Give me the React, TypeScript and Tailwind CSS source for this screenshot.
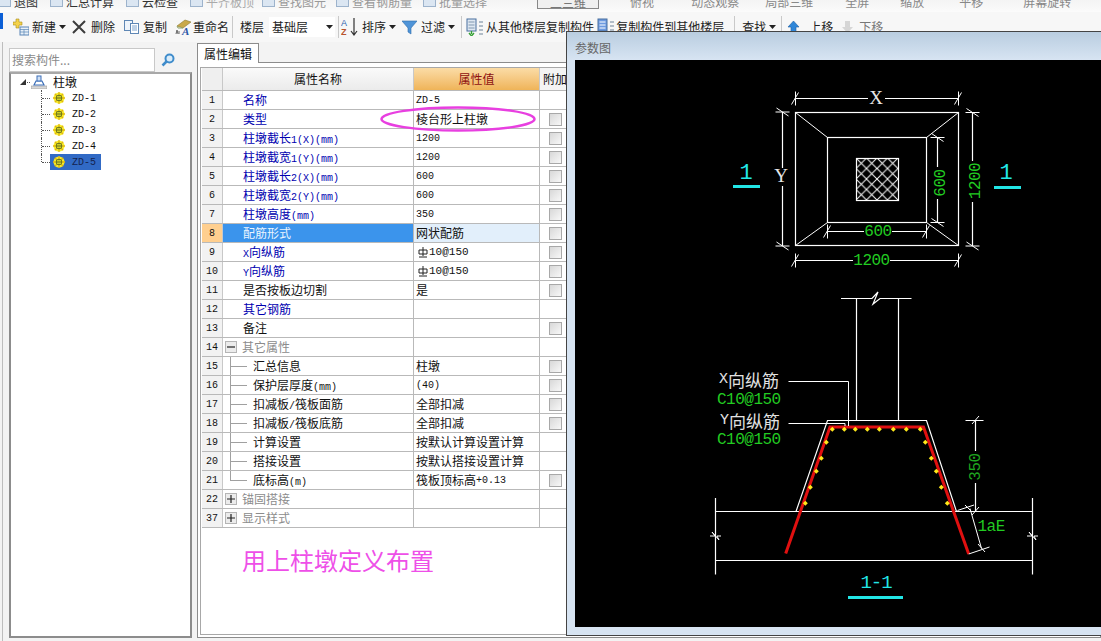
import React from 'react';

const CJK = '"Noto Sans CJK SC","Noto Sans CJK JP",sans-serif';
const MONO = '"Liberation Mono","Noto Sans CJK SC",monospace';

function T({ s }: { s: string }) {
  const parts = s.match(/[\x20-\x7e]+|[^\x20-\x7e]+/g) || [];
  return (
    <>
      {parts.map((p, i) =>
        /^[\x20-\x7e]/.test(p) ? (
          <span key={i} className="font-['Liberation_Mono'] text-[10px]">{p}</span>
        ) : (
          <span key={i}>{p}</span>
        )
      )}
    </>
  );
}

const Caret = () => (
  <svg width="7" height="4" viewBox="0 0 7 4" className="ml-[3px]"><path d="M0 0h7L3.5 4z" fill="#222" /></svg>
);
const Sep = ({ m }: { m: string }) => <span className={`h-[22px] w-px bg-[#c9c9c9] ${m}`} />;

const IconNew = () => (
  <svg width="16" height="18" viewBox="0 0 16 18">
    <path d="M3 1h3v3h3v3H6v3H3V7H0V4h3z" fill="#f4d24a" stroke="#a98f1e" strokeWidth=".6" />
    <rect x="7" y="9" width="9" height="8" fill="#e8f0f8" stroke="#5a86b8" />
    <path d="M7 11.5h9M7 14h9M11 11.5V17" stroke="#5a86b8" strokeWidth=".7" />
  </svg>
);
const IconX = () => (
  <svg width="14" height="14" viewBox="0 0 14 14"><path d="M1 1l12 12M13 1L1 13" stroke="#3c3c3c" strokeWidth="2" /></svg>
);
const IconCopy = () => (
  <svg width="15" height="14" viewBox="0 0 15 14">
    <rect x=".5" y=".5" width="8" height="10" fill="#eef4fb" stroke="#5f87b5" />
    <rect x="6.5" y="3.5" width="8" height="10" fill="#fff" stroke="#5f87b5" />
    <path d="M8 6h5M8 8h5M8 10h5" stroke="#7fa3cc" />
  </svg>
);
const IconRename = () => (
  <svg width="17" height="18" viewBox="0 0 17 18">
    <path d="M2 8l8-6 6 2-8 6z" fill="#c9a94a" stroke="#8c7a30" strokeWidth=".6" />
    <path d="M2 8l1 2 5 0" fill="none" stroke="#8fa36a" />
    <path d="M1 16l1-4 1 4M4 16v-3" stroke="#666" fill="none" />
    <text x="7" y="17" fontSize="11" fontWeight="700" fontStyle="italic" fill="#2b56a8" fontFamily="Liberation Serif">A</text>
  </svg>
);
const IconSort = () => (
  <svg width="18" height="20" viewBox="0 0 18 20">
    <text x="0" y="9" fontSize="9" fill="#2e62b0" fontFamily="Liberation Sans">A</text>
    <text x="0" y="18" fontSize="9" fontWeight="700" fill="#b8542c" fontFamily="Liberation Sans">Z</text>
    <path d="M13 1v16M10 14l3 4 3-4" stroke="#333" strokeWidth="1.2" fill="none" />
  </svg>
);
const IconFilter = () => (
  <svg width="15" height="15" viewBox="0 0 15 15"><path d="M0 1h15L9 8v6l-3-2V8z" fill="#4f94d8" stroke="#2d6cab" strokeWidth=".6" /></svg>
);
const IconCopyFrom = ({ up }: { up?: boolean }) => (
  <svg width="18" height="18" viewBox="0 0 18 18">
    <rect x="1" y="1" width="9" height="12" fill={up ? '#6d9ae0' : '#dfe8f2'} stroke="#486f9e" />
    <path d="M2.5 4h6M2.5 7h6M2.5 10h6" stroke={up ? '#fff' : '#8098b0'} />
    <path d="M13 4h4M13 8h4M13 12h4M13 16h4" stroke="#6f8399" strokeWidth="1.2" />
    {!up && <path d="M5.500 13v3M3 15l2.500 3L8 15" stroke="#35a035" strokeWidth="1.400" fill="none" />}
  </svg>
);
const IconArrow = ({ up }: { up?: boolean }) => (
  <svg width="13" height="14" viewBox="0 0 13 14">
    {up ? <path d="M6.500 1L12 7H9v6H4V7H1z" fill="#2f86d8" stroke="#1e5fa5" strokeWidth=".6" /> : <path d="M4 1h5v6h3l-5.500 6L1 7h3z" fill="#d6d6d6" />}
  </svg>
);
const Gear = () => (
  <svg width="12" height="12" viewBox="0 0 12 12">
    <circle cx="6" cy="6" r="5.500" fill="#f7ee2b" />
    <path d="M6 0v12M0 6h12M1.800 1.800l8.400 8.400M10.200 1.800l-8.400 8.400" stroke="#e2b80d" strokeWidth="1.300" />
    <circle cx="6" cy="6" r="3.200" fill="#6e7a1e" />
    <path d="M4 4.500h4M4 6h4M4 7.500h4" stroke="#f7ee2b" strokeWidth=".7" />
  </svg>
);
const Pier = () => (
  <svg width="16" height="14" viewBox="0 0 16 14">
    <path d="M0 11h16v3H0z" fill="#d8d8d8" stroke="#999" strokeWidth=".6" />
    <path d="M3 10l2-4h6l2 4z" fill="#fff" stroke="#3c6fb8" strokeWidth="1.200" />
    <rect x="6" y="1" width="4" height="5" fill="#cfe0f5" stroke="#3c6fb8" />
  </svg>
);
const Rebar = () => (
  <svg width="10" height="11" viewBox="0 0 10 11" className="mr-[1px]">
    <path d="M5 0v9M1 3h8v4H1zM1 10h8" stroke="#222" fill="none" strokeWidth="1" />
  </svg>
);

const topItems: [string, string][] = [
  ['退图', 'ml-[14px] text-[#333]'],
  ['汇总计算', 'ml-[28px] text-[#333]'],
  ['云检查', 'ml-[28px] text-[#333]'],
  ['平齐板顶', 'ml-[28px] text-[#aaa]'],
  ['查找图元', 'ml-[24px] text-[#999]'],
  ['查看钢筋量', 'ml-[26px] text-[#999]'],
  ['批量选择', 'ml-[27px] text-[#999]'],
];
const topRight: [string, string][] = [
  ['俯视', 'ml-[31px]'],
  ['动态观察', 'ml-[37px]'],
  ['局部三维', 'ml-[26px]'],
  ['全屏', 'ml-[32px]'],
  ['缩放', 'ml-[31px]'],
  ['平移', 'ml-[35px]'],
  ['屏幕旋转', 'ml-[40px]'],
];

function TopStrip() {
  return (
    <div className="flex h-[12px] overflow-hidden bg-gradient-to-b from-[#f4f4f4] to-[#fbfbfb]">
      <div className="flex items-start -mt-[6px] text-[12px] leading-[16px] whitespace-nowrap">
        {topItems.map(([t, c]) => (
          <span key={t} className={`${c} flex-none relative`}>
            <span className="absolute -left-[16px] top-[3px] h-[10px] w-[13px] border border-[#9db3cc] bg-[#dbe6f2]" />
            {t}
          </span>
        ))}
        <span className="ml-[50px] flex-none h-[15px] w-[62px] border border-[#888] bg-[#f0f0f0] text-center text-[#777]">二三维</span>
        {topRight.map(([t, c]) => (
          <span key={t} className={`${c} flex-none text-[#888]`}>{t}</span>
        ))}
      </div>
    </div>
  );
}

function Toolbar() {
  return (
    <div className="flex h-[30px] items-center bg-[#f7f7f7] text-[12px] text-[#222] whitespace-nowrap">
      <span className="h-[16px] w-[3px] -mt-[12px] bg-[#0b5fd6] flex-none" />
      <span className="ml-[10px]"><IconNew /></span>
      <span className="ml-[3px]">新建</span><Caret />
      <span className="ml-[6px]"><IconX /></span>
      <span className="ml-[5px]">删除</span>
      <span className="ml-[9px]"><IconCopy /></span>
      <span className="ml-[4px]">复制</span>
      <span className="ml-[8px]"><IconRename /></span>
      <span className="ml-[1px]">重命名</span>
      <Sep m="ml-[3px]" />
      <span className="ml-[7px]">楼层</span>
      <span className="ml-[5px] flex h-[20px] w-[66px] items-center justify-between bg-white pl-[3px] pr-[2px]">基础层<Caret /></span>
      <Sep m="ml-[3px]" />
      <span className="ml-[2px]"><IconSort /></span>
      <span className="ml-[3px]">排序</span><Caret />
      <span className="ml-[6px]"><IconFilter /></span>
      <span className="ml-[4px]">过滤</span><Caret />
      <Sep m="ml-[6px]" />
      <span className="ml-[4px]"><IconCopyFrom /></span>
      <span className="ml-[2px]">从其他楼层复制构件</span>
      <span className="ml-[3px]"><IconCopyFrom up /></span>
      <span className="ml-[1px]">复制构件到其他楼层</span>
      <Sep m="ml-[10px]" />
      <span className="ml-[7px]">查找</span><Caret />
      <Sep m="ml-[5px]" />
      <span className="ml-[5px]"><IconArrow up /></span>
      <span className="ml-[9px]">上移</span>
      <span className="ml-[8px]"><IconArrow /></span>
      <span className="ml-[5px] text-[#777]">下移</span>
    </div>
  );
}

function LeftPanel() {
  const items = ['ZD-1', 'ZD-2', 'ZD-3', 'ZD-4', 'ZD-5'];
  return (
    <div className="flex w-[194px] flex-none flex-col pl-[6px] pr-[5px] pb-[3px]">
      <div className="mt-[5px] flex h-[25px] flex-none items-center">
        <div className="flex h-[24px] w-[146px] items-center border border-[#c8c8c8] bg-white pl-[2px] text-[12px] text-[#8a8a8a]">搜索构件...</div>
        <svg className="ml-[6px]" width="14" height="14" viewBox="0 0 14 14">
          <circle cx="8.500" cy="5.500" r="4" fill="#d9ecfa" stroke="#3f8ccb" strokeWidth="2" />
          <path d="M5.500 8.500L1.500 12.500" stroke="#3f8ccb" strokeWidth="2.500" />
        </svg>
      </div>
      <div className="flex-1 border-2 border-[#8c8c8c] border-t-[#a8a8a8] bg-white text-[12px] text-[#111]">
        <div className="flex h-[16px] items-center pl-[9px]">
          <svg width="6" height="6" viewBox="0 0 6 6"><path d="M6 0v6H0z" fill="#333" /></svg>
          <span className="ml-[1px] w-[3px] border-b border-dotted border-[#555]" />
          <span className="ml-[1px]"><Pier /></span>
          <span className="ml-[6px]">柱墩</span>
        </div>
        <div className="ml-[30px] w-fit">
          {items.map((z, i) => (
            <div key={z} className="flex h-[16px] items-stretch">
              <span className={`w-[9px] border-l border-dotted border-[#555] ${i === 4 ? 'h-[8px]' : ''}`}>
                <span className="mt-[8px] block border-b border-dotted border-[#555]" />
              </span>
              <div className={`flex w-[51px] items-center pl-[3px] ${i === 4 ? 'bg-[#316ac5] text-[#14234f]' : ''}`}>
                <Gear />
                <span className="ml-[7px] font-['Liberation_Mono'] text-[10px]">{z}</span>
              </div>
            </div>
          ))}
        </div>
      </div>
    </div>
  );
}

type Row = {
  n: number;
  name: string;
  v?: React.ReactNode;
  c?: boolean;
  color?: string;
  kind?: 'group-open' | 'group-closed' | 'child' | 'last';
};
const BLUE = 'text-[#0000b0]';
const rows: Row[] = [
  { n: 1, name: '名称', v: <T s="ZD-5" />, color: BLUE },
  { n: 2, name: '类型', v: '棱台形上柱墩', c: true, color: BLUE },
  { n: 3, name: '柱墩截长1(X)(mm)', v: <T s="1200" />, c: true, color: BLUE },
  { n: 4, name: '柱墩截宽1(Y)(mm)', v: <T s="1200" />, c: true, color: BLUE },
  { n: 5, name: '柱墩截长2(X)(mm)', v: <T s="600" />, c: true, color: BLUE },
  { n: 6, name: '柱墩截宽2(Y)(mm)', v: <T s="600" />, c: true, color: BLUE },
  { n: 7, name: '柱墩高度(mm)', v: <T s="350" />, c: true, color: BLUE },
  { n: 8, name: '配筋形式', v: '网状配筋', c: true },
  { n: 9, name: 'X向纵筋', v: <span className="flex items-center pl-[2px]"><Rebar /><span className="font-['Liberation_Mono'] text-[11px]">10@150</span></span>, c: true, color: BLUE },
  { n: 10, name: 'Y向纵筋', v: <span className="flex items-center pl-[2px]"><Rebar /><span className="font-['Liberation_Mono'] text-[11px]">10@150</span></span>, c: true, color: BLUE },
  { n: 11, name: '是否按板边切割', v: '是', c: true },
  { n: 12, name: '其它钢筋', color: BLUE },
  { n: 13, name: '备注', c: true },
  { n: 14, name: '其它属性', kind: 'group-open' },
  { n: 15, name: '汇总信息', v: '柱墩', c: true, kind: 'child' },
  { n: 16, name: '保护层厚度(mm)', v: <T s="(40)" />, c: true, kind: 'child' },
  { n: 17, name: '扣减板/筏板面筋', v: '全部扣减', c: true, kind: 'child' },
  { n: 18, name: '扣减板/筏板底筋', v: '全部扣减', c: true, kind: 'child' },
  { n: 19, name: '计算设置', v: '按默认计算设置计算', kind: 'child' },
  { n: 20, name: '搭接设置', v: '按默认搭接设置计算', kind: 'child' },
  { n: 21, name: '底标高(m)', v: <T s="筏板顶标高+0.13" />, c: true, kind: 'last' },
  { n: 22, name: '锚固搭接', kind: 'group-closed' },
  { n: 37, name: '显示样式', kind: 'group-closed' },
];

function Box({ open }: { open: boolean }) {
  return (
    <span className="ml-[2px] mr-[5px] flex h-[12px] w-[12px] flex-none items-center justify-center border border-[#b5b5b5] bg-[#ececec]">
      <svg width="8" height="8" viewBox="0 0 8 8">
        <path d={open ? 'M0 4h8' : 'M0 4h8M4 0v8'} stroke="#222" strokeWidth="1.200" />
      </svg>
    </span>
  );
}

function NameCell({ r }: { r: Row }) {
  const sel = r.n === 8;
  const base = `flex h-full w-[191px] flex-none items-center border-r border-[#b9b9b9] text-[12px] ${sel ? 'bg-[#3b94ec] text-[#eaf4ff]' : ''}`;
  if (r.kind === 'group-open' || r.kind === 'group-closed') {
    return (
      <div className={base}>
        <Box open={r.kind === 'group-open'} />
        <span className="text-[#8c8c8c]">{r.name}</span>
      </div>
    );
  }
  if (r.kind === 'child' || r.kind === 'last') {
    return (
      <div className={base}>
        <span className={`ml-[7px] w-px flex-none bg-[#a0a0a0] ${r.kind === 'last' ? 'h-[10px] self-start' : 'self-stretch'}`} />
        <span className="h-px w-[16px] flex-none bg-[#a0a0a0]" />
        <span className="ml-[6px] text-[#111]"><T s={r.name} /></span>
      </div>
    );
  }
  return (
    <div className={`${base} pl-[20px]`}>
      <span className={sel ? '' : r.color || 'text-[#111]'}><T s={r.name} /></span>
    </div>
  );
}

function TableRow({ r }: { r: Row }) {
  const sel = r.n === 8;
  return (
    <div className="flex h-[19px] border-b border-[#b9b9b9]">
      <div className={`flex h-full w-[21px] flex-none items-center justify-center border-r border-[#c8c8c8] font-['Liberation_Mono'] text-[10px] text-[#111] ${sel ? 'bg-[#ffcf8f] text-[#9a4a00]' : 'bg-[#f2f2f2]'}`}>
        {r.n}
      </div>
      <NameCell r={r} />
      <div className={`flex h-full w-[126px] flex-none items-center border-r border-[#b9b9b9] pl-[2px] text-[12px] text-[#111] ${sel ? 'bg-[#e2effb]' : ''}`}>
        {r.v}
      </div>
      <div className="flex h-full w-[30px] flex-none items-center pl-[9px]">
        {r.c && <span className="h-[13px] w-[13px] border border-[#a8a8a8] bg-gradient-to-br from-[#d8d8d8] to-[#f8f8f8]" />}
      </div>
    </div>
  );
}

function RightPanel() {
  return (
    <div className="flex min-w-0 flex-1 flex-col pb-[3px]">
      <div className="relative z-10 -mb-px mt-px flex h-[20px] w-[62px] items-center justify-center border border-b-0 border-[#8c8c8c] bg-white text-[12px] text-[#111]">属性编辑</div>
      <div className="flex-1 border border-[#8c8c8c] bg-white px-[2px] pb-[2px] pt-[4px]">
        <div className="h-full border border-[#a8a8a8] pl-[1px]">
          <div className="flex h-[23px] border-b border-[#b9b9b9] text-[12px] text-[#111]">
            <div className="w-[21px] flex-none border-r border-[#c8c8c8] bg-[#efefef]" />
            <div className="flex w-[191px] flex-none items-center justify-center border-r border-[#c8c8c8] bg-gradient-to-b from-[#fafafa] to-[#ebebeb]">属性名称</div>
            <div className="flex w-[126px] flex-none items-center justify-center border-r border-[#c8c8c8] bg-gradient-to-b from-[#fbdca6] to-[#efb458] text-[#8e1010]">属性值</div>
            <div className="flex w-[60px] flex-none items-center bg-[#f4f4f4] pl-[3px]">附加</div>
          </div>
          <div className="w-[368px]">
            {rows.map((r) => <TableRow key={r.n} r={r} />)}
          </div>
          <div className="ml-[40px] mt-[18px] text-[24px] leading-[28px] text-[#ee4fe8] whitespace-nowrap">用上柱墩定义布置</div>
        </div>
      </div>
    </div>
  );
}

const W = '#ffffff';
const G = '#22cc22';
const C = '#22e6e6';

function L({ d, c = W, w = 1.200 }: { d: string; c?: string; w?: number }) {
  return <path d={d} stroke={c} strokeWidth={w} fill="none" />;
}

function Txt({ x, y, s, c = G, size = 16, rot, font = MONO, anchor = 'middle', ls = -0.5 }: { x: number; y: number; s: string; c?: string; size?: number; rot?: boolean; font?: string; anchor?: 'middle' | 'start'; ls?: number }) {
  return (
    <text x={x} y={y} fill={c} fontSize={size} letterSpacing={ls} fontFamily={font} textAnchor={anchor} dominantBaseline="central" transform={rot ? `rotate(-90 ${x} ${y})` : undefined}>
      {s}
    </text>
  );
}

function Mark({ x, y, horiz }: { x: number; y: number; horiz?: boolean }) {
  return horiz ? <L d={`M${x - 4} ${y + 6}L${x + 3} ${y - 6}M${x} ${y - 7}V${y + 7}`} w={1} /> : <L d={`M${x - 6} ${y - 4}L${x + 6} ${y + 4}M${x - 7} ${y}H${x + 7}`} w={1} />;
}

const topDots = [397, 433, 466, 502, 538, 580, 619, 661];
const sideDots = [[379, 457], [364, 505], [349, 544], [331, 592], [316, 640], [676, 457], [694, 505], [709, 544], [724, 592], [742, 640]];

function Drawing() {
  const dots = [...topDots.map((x) => [x, 418]), ...sideDots].map(([x, y]) => [700 + x / 3, 290 + y / 3]);
  return (
    <svg width="526" height="567" viewBox="575 60 526 567" className="block">
      <defs>
        <pattern id="h" x="856" y="158" width="10.500" height="10.500" patternUnits="userSpaceOnUse">
          <path d="M0 0L10.500 10.500M10.500 0L0 10.500" stroke="#fff" strokeWidth="1" />
        </pattern>
      </defs>
      {/* plan */}
      <rect x="795.500" y="112.500" width="163" height="133" fill="none" stroke={W} strokeWidth="1.200" />
      <rect x="827.500" y="137.500" width="99" height="85" fill="none" stroke={W} strokeWidth="1.200" />
      <L d="M795.500 112.500L827.500 137.500M958.500 112.500L926.500 137.500M795.500 245.500L827.500 222.500M958.500 245.500L926.500 222.500" w={1} />
      <rect x="856.500" y="158.500" width="42" height="42" fill="url(#h)" stroke={W} strokeWidth="1.200" />
      {/* X */}
      <L d="M795.500 98.500H868M885 98.500H958.500" />
      <Mark x={795.5} y={98.5} horiz /><Mark x={958.5} y={98.5} horiz />
      <Txt x={876} y={97} s="X" c="#e6e6e6" size={19} font="Liberation Serif" ls={0} />
      {/* Y */}
      <L d="M782.500 112V168M782.500 186V246" />
      <Mark x={782.5} y={112} /><Mark x={782.5} y={246} />
      <Txt x={781} y={175} s="Y" c="#e6e6e6" size={19} font="Liberation Serif" ls={0} />
      {/* 1200 right */}
      <L d="M972.500 112V161M972.500 202V246" />
      <Mark x={972.5} y={112.5} /><Mark x={972.5} y={246} />
      <Txt x={976} y={181} s="1200" rot />
      {/* 600 right */}
      <L d="M937.500 137V167M937.500 199V222" />
      <Mark x={937.5} y={137.5} /><Mark x={937.5} y={222.5} />
      <Txt x={941} y={183} s="600" rot />
      {/* 600 bottom */}
      <L d="M827.500 231.500H864M892 231.500H926.500" />
      <Mark x={827.5} y={231.5} horiz /><Mark x={926.5} y={231.5} horiz />
      <Txt x={878} y={232} s="600" />
      {/* 1200 bottom */}
      <L d="M795.500 260.500H853M890 260.500H958.500" />
      <Mark x={795.5} y={260.5} horiz /><Mark x={958.5} y={260.5} horiz />
      <Txt x={871.500} y={261} s="1200" />
      {/* section marks */}
      <Txt x={746} y={173} s="1" c={C} size={22} ls={0} />
      <path d="M733 186.500H760" stroke={C} strokeWidth="3" />
      <Txt x={1006} y={173} s="1" c={C} size={22} ls={0} />
      <path d="M994 187.500H1021" stroke={C} strokeWidth="3" />

      {/* section */}
      <L d="M856.500 298.500V420.500M898.500 298.500V420.500" />
      <L d="M841 298.500H872L878 292L873 304L880 298.500H911.500" />
      <L d="M796 511.500L827.500 420.500H926.500L956.500 511.500" />
      <L d="M715.500 511.500H1032.500M715.500 560.500H1032.500M715.500 498V574.500M1032.500 498V574.500" />
      <L d="M710 536H715L712 532L719 540L717 536H721M1027 536H1032L1029 532L1036 540L1034 536H1038" w={1} />
      <path d="M785.700 553.500L830 427H923.500L968.700 554" stroke="#e01010" strokeWidth="3" fill="none" />
      {dots.map(([x, y], i) => (
        <path key={i} d={`M${x} ${y - 2.500}L${x + 2.500} ${y}L${x} ${y + 2.500}L${x - 2.500} ${y}z`} fill="#ffe81a" />
      ))}
      {/* leaders */}
      <L d="M788.500 381.500H848.500V426M788.500 423.500H845V426" w={1} />
      <text x={719} y={379} fill="#e2e2e2" fontSize="17" fontFamily={CJK} dominantBaseline="central">
        <tspan fontFamily="Liberation Mono" fontSize="15">X</tspan>向纵筋
      </text>
      <Txt x={717} y={400} s="C10@150" anchor="start" />
      <text x={720} y={420} fill="#e2e2e2" fontSize="17" fontFamily={CJK} dominantBaseline="central">
        <tspan fontFamily="Liberation Mono" fontSize="15">Y</tspan>向纵筋
      </text>
      <Txt x={717} y={440} s="C10@150" anchor="start" />
      {/* 350 */}
      <L d="M975.500 420.500V451M975.500 483V511.500M965.500 420.500H983.500" />
      <L d="M972 424L979 416M972 515L979 507" w={1} />
      <Txt x={976} y={467} s="350" rot c="#1fa51f" />
      {/* lae */}
      <L d="M957.500 510.500L974 505M970 508.500L981.500 548.500M968.700 554L989.500 547M965 505L972 512M978 544L985 552" w={1} />
      <Txt x={977.500} y={527} s="1aE" anchor="start" />
      {/* 1-1 */}
      <Txt x={876} y={583} s="1-1" c={C} size={19} ls={-1} />
      <path d="M848 597.500H903" stroke={C} strokeWidth="3" />
    </svg>
  );
}

function Dialog() {
  return (
    <div className="absolute left-[566px] top-[31px] z-20 flex h-[605px] w-[535px] flex-col border-l border-t border-b border-[#444] bg-[#d7e4f2]">
      <div className="flex h-[28px] flex-none items-center bg-gradient-to-b from-[#b9cde0] to-[#d7e4f2] pl-[8px] pt-[4px] text-[12px] text-[#666]">参数图</div>
      <div className="ml-[8px] h-[567px] bg-black">
        <Drawing />
      </div>
    </div>
  );
}

export default function App() {
  return (
    <div className="relative flex h-[641px] w-[1101px] flex-col overflow-hidden bg-[#f3f3f3]" style={{ fontFamily: CJK }}>
      <TopStrip />
      <Toolbar />
      <div className="flex min-h-0 flex-1">
        <span className="h-full w-[3px] flex-none border-r border-[#bdbdbd]" />
        <LeftPanel />
        <RightPanel />
      </div>
      <Dialog />
      <svg className="absolute left-[378px] top-[104px] z-10" width="162" height="30" viewBox="378 104 162 30">
        <ellipse cx="458" cy="119" rx="76.500" ry="11.500" fill="none" stroke="#e83fe0" strokeWidth="2.500" />
      </svg>
    </div>
  );
}
